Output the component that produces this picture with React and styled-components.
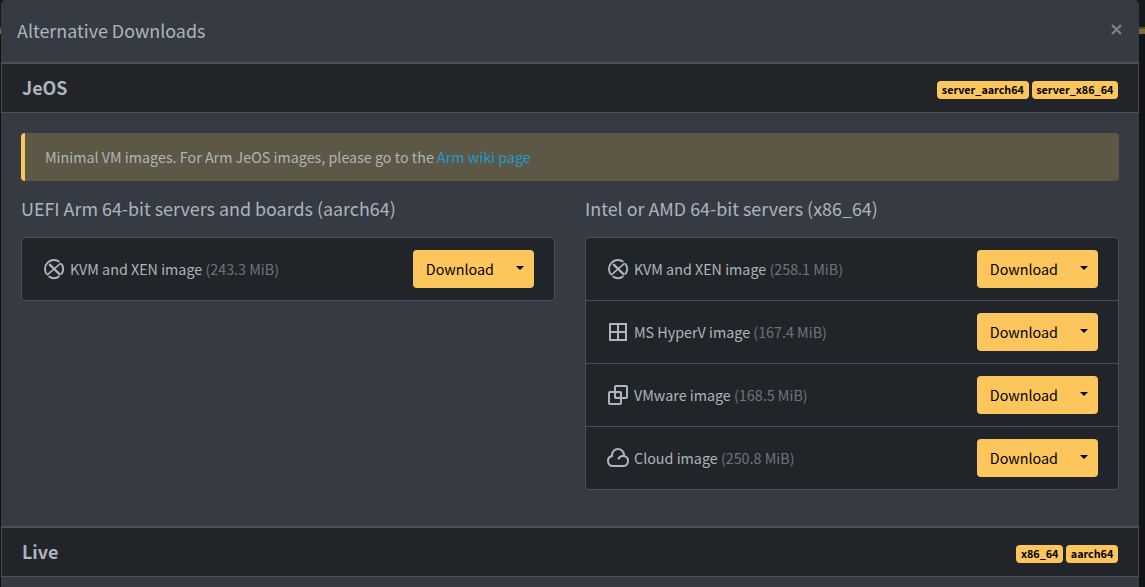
import React from "react";
import styled, { createGlobalStyle } from "styled-components";

const GlobalStyle = createGlobalStyle`
  *, *::before, *::after { box-sizing: border-box; }
  html, body { margin: 0; height: 587px; overflow: hidden; background: #111316; }
  body {
    font-family: "Noto Sans CJK SC", "Noto Sans", sans-serif;
    font-size: 14.32px;
    line-height: 24px;
    color: #adb5bd;
  }
`;

const Page = styled.div`
  height: 587px;
  padding: 0 6px 0 1px;
  overflow: hidden;
  background: linear-gradient(#171a1d 0 27px, #3c5c1c 27px 29px, #80683a 29px 34px, #111316 34px);
`;

const Modal = styled.div`
  height: 600px;
  background: #363a43;
  border-radius: 5px 5px 0 0;
`;

const ModalHeader = styled.header`
  display: flex;
  align-items: center;
  justify-content: space-between;
  height: 63px;
  padding: 0 17px 0 16px;
  border-bottom: 1px solid #495057;
`;

const ModalTitle = styled.h5`
  margin: 0 0 2px;
  font-size: 17.9px;
  font-weight: 400;
  line-height: 30px;
`;

const CloseButton = styled.button`
  display: flex;
  padding: 0;
  margin-bottom: 3px;
  border: 0;
  background: none;
  color: #7c8188;
`;

const SectionHeader = styled.div`
  display: flex;
  align-items: center;
  justify-content: space-between;
  height: 50px;
  padding: 0 20px;
  background: #212529;
  border: 1px solid #495057;
`;

const SectionTitle = styled.h5`
  margin: 0 0 2px;
  font-size: 17.9px;
  font-weight: 700;
  line-height: 24px;
`;

const Badges = styled.div`
  display: flex;
  gap: 3px;
  padding-top: 4px;
`;

const Badge = styled.span`
  height: 18px;
  padding: 0 4.7px;
  border-radius: 4px;
  background: #fdc65c;
  color: #000;
  font-size: 10.75px;
  font-weight: 700;
  line-height: 17px;
`;

const SectionBody = styled.div`
  height: 414px;
  padding: 20px;
  border-bottom: 1px solid #495057;
`;

const Notice = styled.div`
  height: 48px;
  padding: 12px 20px;
  border-left: 4px solid #fdc65c;
  border-radius: 4px;
  background: #5d5745;
`;

const Link = styled.a`
  color: #1f9bd1;
  text-decoration: none;
`;

const Columns = styled.div`
  display: grid;
  grid-template-columns: 1fr 1fr;
  gap: 30px;
  margin-top: 15px;
`;

const ColumnTitle = styled.h5`
  margin: 0 0 17px;
  font-size: 17.9px;
  font-weight: 400;
  line-height: 24px;
`;

const List = styled.div`
  border: 1px solid #495057;
  border-radius: 4px;
  background: #212529;
`;

const Row = styled.div`
  display: flex;
  align-items: center;
  height: 62px;
  padding: 0 20px;
  & + & {
    height: 63px;
    border-top: 1px solid #495057;
  }
`;

const Icon = styled.svg`
  width: 24px;
  height: 24px;
  margin-right: 4px;
  fill: none;
  stroke: currentColor;
  stroke-width: 2;
`;

const Label = styled.span`
  flex: 1;
`;

const Size = styled.span`
  color: #6c757d;
`;

const ButtonGroup = styled.div`
  display: flex;
  width: 121px;
  height: 38px;
  border-radius: 4px;
  background: #fdc65c;
`;

const DownloadButton = styled.button`
  width: 93px;
  padding: 0 0 0 12.8px;
  border: 0;
  background: none;
  color: #000;
  font: inherit;
  text-align: left;
`;

const ToggleButton = styled.button`
  display: flex;
  flex: 1;
  padding: 16px 0 0 9.6px;
  border: 0;
  background: none;
`;

const Caret = styled.span`
  border: 4.8px solid transparent;
  border-top-color: #000;
  border-bottom: 0;
`;

const icons = {
  xen: (
    <>
      <path
        strokeWidth="1.9"
        d="M17.4 4.8A9 9 0 0 0 4.8 17.4M6.6 19.2A9 9 0 0 0 17.4 19.2M19.2 17.4A9 9 0 0 0 19.2 6.6"
      />
      <path strokeWidth="2.4" d="M7.2 7.2 18.4 18" />
      <path strokeWidth="1.6" d="M18.8 6.2 5 18.2" />
    </>
  ),
  hyperv: <path d="M4 4h16v16H4zM12 4v16M4 12h16" />,
  vmware: (
    <>
      <rect x="9" y="3" width="12" height="12" rx="1" />
      <rect x="3" y="9" width="12" height="12" rx="1" />
      <rect x="9" y="9" width="6" height="6" rx="2.2" />
    </>
  ),
  cloud: (
    <path
      fill="currentColor"
      stroke="none"
      d="M17 21H7A6 6 0 0 1 5.008 9.339a7 7 0 1 1 13.984 0A6 6 0 0 1 17 21zm0-12a5 5 0 1 0-9.994.243l.07 1.488-1.404.494A4.002 4.002 0 0 0 7 19h10a4 4 0 1 0-3.796-5.265l-1.898-.633A6.003 6.003 0 0 1 17 9z"
    />
  ),
};

const columns = [
  {
    title: "UEFI Arm 64-bit servers and boards (aarch64)",
    images: [["xen", "KVM and XEN image", "243.3 MiB"]],
  },
  {
    title: "Intel or AMD 64-bit servers (x86_64)",
    images: [
      ["xen", "KVM and XEN image", "258.1 MiB"],
      ["hyperv", "MS HyperV image", "167.4 MiB"],
      ["vmware", "VMware image", "168.5 MiB"],
      ["cloud", "Cloud image", "250.8 MiB"],
    ],
  },
];

function Section({ title, tags }) {
  return (
    <SectionHeader>
      <SectionTitle>{title}</SectionTitle>
      <Badges>
        {tags.map((tag) => (
          <Badge key={tag}>{tag}</Badge>
        ))}
      </Badges>
    </SectionHeader>
  );
}

function ImageRow({ icon, name, size }) {
  return (
    <Row>
      <Icon viewBox="0 0 24 24">{icons[icon]}</Icon>
      <Label>
        {name} <Size>({size})</Size>
      </Label>
      <ButtonGroup>
        <DownloadButton>Download</DownloadButton>
        <ToggleButton aria-label="More options">
          <Caret />
        </ToggleButton>
      </ButtonGroup>
    </Row>
  );
}

export default function App() {
  return (
    <Page>
      <GlobalStyle />
      <Modal>
        <ModalHeader>
          <ModalTitle>Alternative Downloads</ModalTitle>
          <CloseButton aria-label="Close">
            <svg width="11" height="11" viewBox="0 0 11 11" stroke="currentColor" strokeWidth="2.4">
              <path d="M1 1l9 9M10 1l-9 9" />
            </svg>
          </CloseButton>
        </ModalHeader>
        <Section title="JeOS" tags={["server_aarch64", "server_x86_64"]} />
        <SectionBody>
          <Notice>
            Minimal VM images. For Arm JeOS images, please go to the <Link>Arm wiki page</Link>
          </Notice>
          <Columns>
            {columns.map(({ title, images }) => (
              <div key={title}>
                <ColumnTitle>{title}</ColumnTitle>
                <List>
                  {images.map(([icon, name, size]) => (
                    <ImageRow key={name} icon={icon} name={name} size={size} />
                  ))}
                </List>
              </div>
            ))}
          </Columns>
        </SectionBody>
        <Section title="Live" tags={["x86_64", "aarch64"]} />
      </Modal>
    </Page>
  );
}
